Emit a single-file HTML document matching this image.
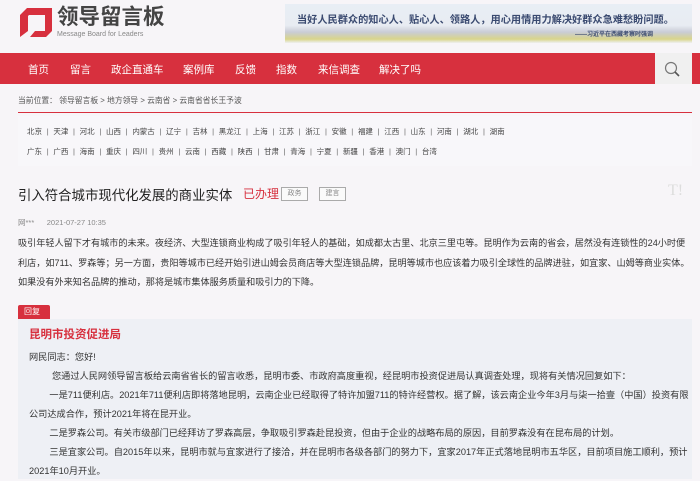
<!DOCTYPE html>
<html><head><meta charset="utf-8"><style>
*{margin:0;padding:0;box-sizing:border-box}
body{width:700px;height:475px;overflow:hidden;background:#f7f5f8;font-family:"Liberation Sans","Noto Sans CJK SC",sans-serif;color:#333;position:relative}
.a{position:absolute;white-space:nowrap}
.nav{position:absolute;left:0;top:53px;width:700px;height:31px;background:#d7303e}
.nav span{position:absolute;top:9px;color:#fff;font-size:10.5px}
.prov{position:absolute;left:18px;top:116px;width:674px;height:50px;background:#f8f7fa}
.prov div{position:absolute;left:9px;font-size:7.5px;color:#444}
.prov i{font-style:normal;color:#666;margin:0 4.7px}
.tag{position:absolute;top:187px;height:14px;border:1px solid #aaa;font-size:7px;color:#888;text-align:center;line-height:12px;background:#fafafa}
.p{position:absolute;left:18px;font-size:9.15px;color:#333;line-height:19.5px;width:675px}
</style></head><body>
<svg class="a" style="left:18px;top:6px" width="36" height="34" viewBox="18 6 36 34"><path fill="#d7303e" fill-rule="evenodd" d="M27,8 L52,8 L52,31 L46,37 L30,37 L35,31 L45,31 L45,15 L29,15 L28,16 L28,31 L20,37 L20,15 Z"/></svg>
<div class="a" style="left:57px;top:4px;font-size:21.5px;font-weight:bold;color:#444;line-height:26px">领导留言板</div>
<div class="a" style="left:57px;top:31px;font-size:7px;color:#888;line-height:8px">Message Board for Leaders</div>
<div class="a" style="left:285px;top:4px;width:407px;height:39px;background:linear-gradient(#e8eef5 0%,#e8ecf2 55%,#c9ccd6 72%,#d9d58a 90%,#eef0f2 100%)"></div>
<div class="a" style="left:297px;top:11px;font-size:10.2px;font-weight:bold;color:#3a4a70">当好人民群众的知心人、贴心人、领路人，用心用情用力解决好群众急难愁盼问题。</div>
<div class="a" style="left:575px;top:29px;font-size:6px;font-weight:bold;color:#3a4a70">——习近平在西藏考察时强调</div>
<div class="nav">
<span style="left:28px">首页</span><span style="left:70px">留言</span><span style="left:111px">政企直通车</span><span style="left:183px">案例库</span><span style="left:235px">反馈</span><span style="left:276px">指数</span><span style="left:318px">来信调查</span><span style="left:379px">解决了吗</span>
<div class="a" style="left:655px;top:0;width:37px;height:31px;background:#f0f0f0"></div>
<svg class="a" style="left:663px;top:7px" width="20" height="18"><circle cx="8" cy="8" r="5.5" fill="none" stroke="#777" stroke-width="1.2"/><path d="M12,12 L16,16" stroke="#555" stroke-width="1.6"/></svg>
</div>
<div class="a" style="left:18px;top:95px;font-size:7.8px;color:#555">当前位置： 领导留言板 &gt; 地方领导 &gt; 云南省 &gt; 云南省省长王予波</div>
<div class="a" style="left:18px;top:112px;width:674px;height:1px;background:#d7303e"></div>
<div class="prov">
<div style="top:10px">北京<i>|</i>天津<i>|</i>河北<i>|</i>山西<i>|</i>内蒙古<i>|</i>辽宁<i>|</i>吉林<i>|</i>黑龙江<i>|</i>上海<i>|</i>江苏<i>|</i>浙江<i>|</i>安徽<i>|</i>福建<i>|</i>江西<i>|</i>山东<i>|</i>河南<i>|</i>湖北<i>|</i>湖南</div>
<div style="top:30px">广东<i>|</i>广西<i>|</i>海南<i>|</i>重庆<i>|</i>四川<i>|</i>贵州<i>|</i>云南<i>|</i>西藏<i>|</i>陕西<i>|</i>甘肃<i>|</i>青海<i>|</i>宁夏<i>|</i>新疆<i>|</i>香港<i>|</i>澳门<i>|</i>台湾</div>
</div>
<div class="a" style="left:18px;top:184px;font-size:13.4px;color:#222">引入符合城市现代化发展的商业实体</div>
<div class="a" style="left:243px;top:185px;font-size:12px;color:#d7303e">已办理</div>
<div class="tag" style="left:281px;width:27px">政务</div>
<div class="tag" style="left:319px;width:27px">建言</div>
<div class="a" style="left:668px;top:182px;font-size:16px;color:#ddd;font-family:'Liberation Serif',serif">T!</div>
<div class="a" style="left:18px;top:217px;font-size:7.5px;color:#888">网***&nbsp;&nbsp;&nbsp;&nbsp;&nbsp;&nbsp;2021-07-27 10:35</div>
<div class="p" style="top:234px">吸引年轻人留下才有城市的未来。夜经济、大型连锁商业构成了吸引年轻人的基础，如成都太古里、北京三里屯等。昆明作为云南的省会，居然没有连锁性的24小时便利店，如711、罗森等；另一方面，贵阳等城市已经开始引进山姆会员商店等大型连锁品牌，昆明等城市也应该着力吸引全球性的品牌进驻，如宜家、山姆等商业实体。如果没有外来知名品牌的推动，那将是城市集体服务质量和吸引力的下降。</div>
<div class="a" style="left:18px;top:305px;width:32px;height:14px;background:#d7303e;color:#fff;font-size:8px;line-height:14px;padding-left:6px;border-radius:2px 2px 0 0">回复</div>
<div class="a" style="left:18px;top:319px;width:674px;height:160px;background:#eef0f5"></div>
<div class="a" style="left:29px;top:326px;font-size:11.5px;font-weight:bold;color:#d7303e">昆明市投资促进局</div>
<div class="p" style="left:29px;width:662px;top:348px;line-height:19px;font-size:9.2px">网民同志：您好!<br>&nbsp;&nbsp;&nbsp;&nbsp;&nbsp;&nbsp;&nbsp;&nbsp;&nbsp;您通过人民网领导留言板给云南省省长的留言收悉，昆明市委、市政府高度重视，经昆明市投资促进局认真调查处理，现将有关情况回复如下：<br>&nbsp;&nbsp;&nbsp;&nbsp;&nbsp;&nbsp;&nbsp;&nbsp;一是711便利店。2021年711便利店即将落地昆明，云南企业已经取得了特许加盟711的特许经营权。据了解，该云南企业今年3月与柒一拾壹（中国）投资有限公司达成合作，预计2021年将在昆开业。<br>&nbsp;&nbsp;&nbsp;&nbsp;&nbsp;&nbsp;&nbsp;&nbsp;二是罗森公司。有关市级部门已经拜访了罗森高层，争取吸引罗森赴昆投资，但由于企业的战略布局的原因，目前罗森没有在昆布局的计划。<br>&nbsp;&nbsp;&nbsp;&nbsp;&nbsp;&nbsp;&nbsp;&nbsp;三是宜家公司。自2015年以来，昆明市就与宜家进行了接洽，并在昆明市各级各部门的努力下，宜家2017年正式落地昆明市五华区，目前项目施工顺利，预计2021年10月开业。</div>
</body></html>
